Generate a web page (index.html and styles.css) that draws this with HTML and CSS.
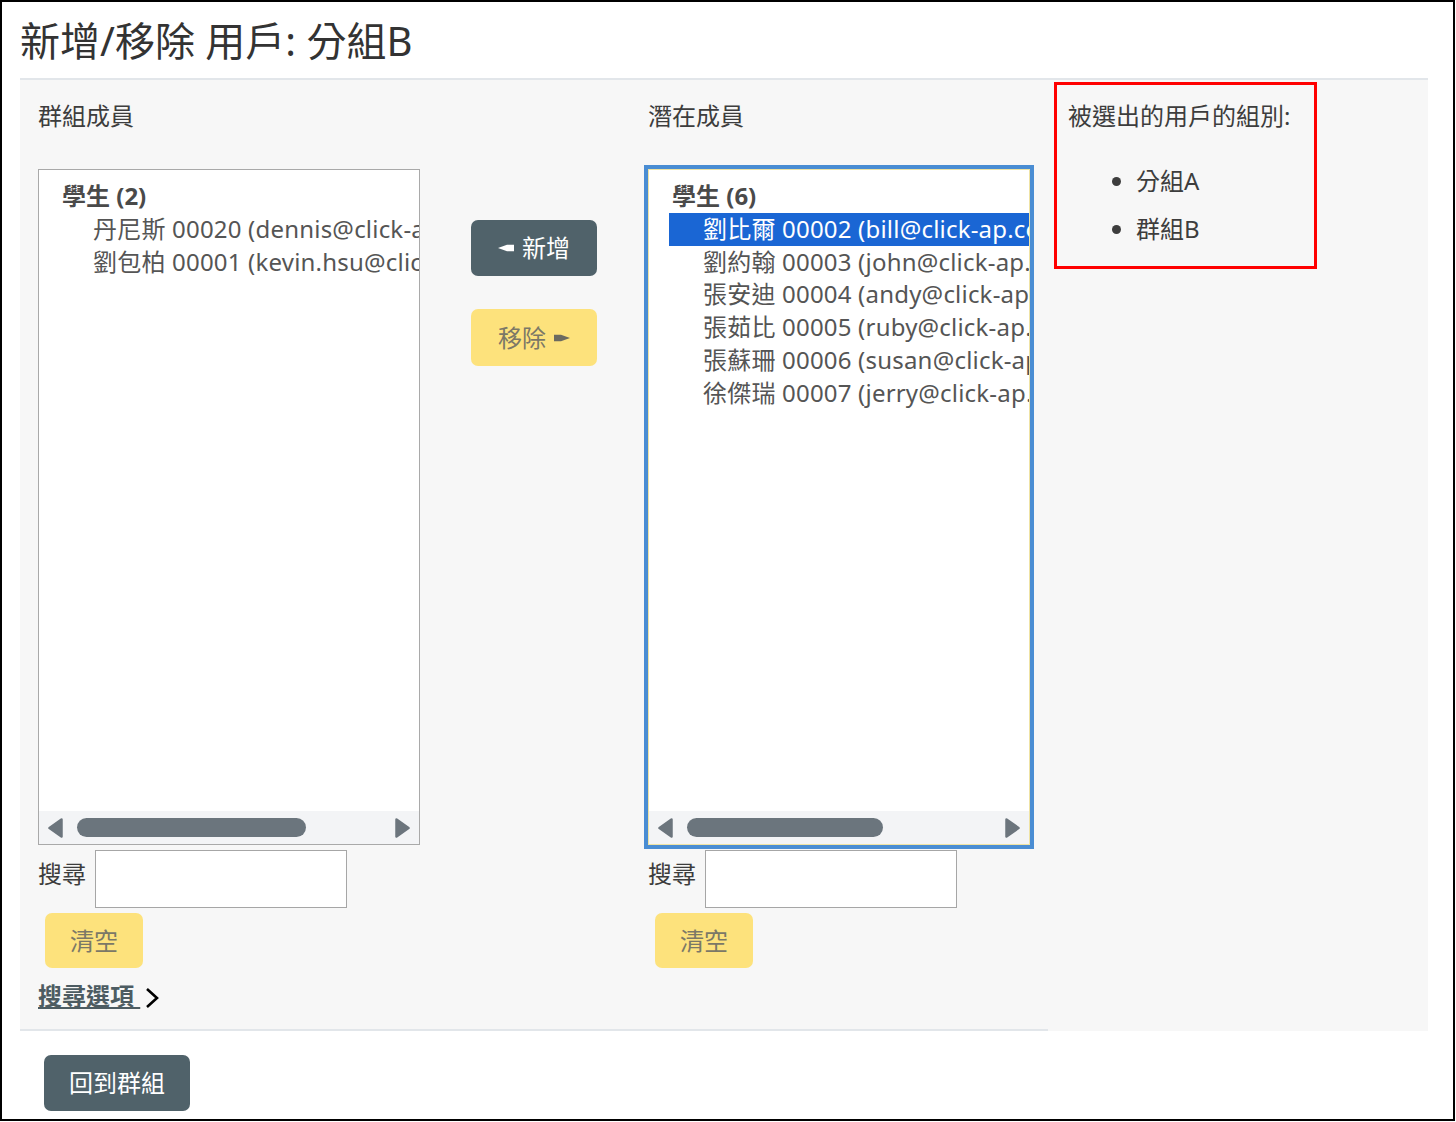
FILE: index.html
```html
<!DOCTYPE html>
<html lang="zh-Hant">
<head>
<meta charset="utf-8">
<title>新增/移除 用戶: 分組B</title>
<link rel="stylesheet" href="styles.css">
</head>
<body>
<div class="frame">
  <h1 class="title">新增/移除 用戶: 分組B</h1>
  <div class="panel">
    <div class="main">
      <div class="cols">
        <div class="col">
          <div class="label">群組成員</div>
          <div class="box">
            <div class="list">
              <div class="group">學生 (2)</div>
              <div class="item">丹尼斯 00020 (dennis@click-ap.com)</div>
              <div class="item">劉包柏 00001 (kevin.hsu@click-ap.com)</div>
            </div>
            <div class="hscroll">
              <svg class="arr" width="15" height="20" viewBox="0 0 15 20"><polygon points="13.5,1.5 1.5,10 13.5,18.5" fill="#6c757d" stroke="#6c757d" stroke-width="2.5" stroke-linejoin="round"/></svg>
              <div class="thumb thumb-left"></div>
              <svg class="arr arr-r" width="15" height="20" viewBox="0 0 15 20"><polygon points="1.5,1.5 13.5,10 1.5,18.5" fill="#6c757d" stroke="#6c757d" stroke-width="2.5" stroke-linejoin="round"/></svg>
            </div>
          </div>
          <div class="search">
            <span class="search-label">搜尋</span>
            <div class="input"></div>
          </div>
          <div class="btn btn-yellow btn-clear">清空</div>
          <div class="opts"><span class="opts-text">搜尋選項 </span><svg class="chev" width="14" height="22" viewBox="0 0 14 22"><polyline points="2,2 12,11 2,20" fill="none" stroke="#000" stroke-width="2.6" stroke-linejoin="miter"/></svg></div>
        </div>

        <div class="col mid">
          <div class="btn btn-dark btn-move">
            <svg width="16" height="8" viewBox="0 0 16 8"><polygon points="0,4 9,0.8 16,0.8 16,7.2 9,7.2" fill="#fff"/></svg>
            <span>新增</span>
          </div>
          <div class="btn btn-yellow btn-move btn-remove">
            <span>移除</span>
            <svg width="16" height="8" viewBox="0 0 16 8"><polygon points="16,4 7,0.8 0,0.8 0,7.2 7,7.2" fill="#6b6a60"/></svg>
          </div>
        </div>

        <div class="col">
          <div class="label">潛在成員</div>
          <div class="box box-focus">
            <div class="list">
              <div class="group">學生 (6)</div>
              <div class="item selected">劉比爾 00002 (bill@click-ap.com)</div>
              <div class="item">劉約翰 00003 (john@click-ap.com)</div>
              <div class="item">張安迪 00004 (andy@click-ap.com)</div>
              <div class="item">張茹比 00005 (ruby@click-ap.com)</div>
              <div class="item">張蘇珊 00006 (susan@click-ap.com)</div>
              <div class="item">徐傑瑞 00007 (jerry@click-ap.com)</div>
            </div>
            <div class="hscroll">
              <svg class="arr" width="15" height="20" viewBox="0 0 15 20"><polygon points="13.5,1.5 1.5,10 13.5,18.5" fill="#6c757d" stroke="#6c757d" stroke-width="2.5" stroke-linejoin="round"/></svg>
              <div class="thumb thumb-right"></div>
              <svg class="arr arr-r" width="15" height="20" viewBox="0 0 15 20"><polygon points="1.5,1.5 13.5,10 1.5,18.5" fill="#6c757d" stroke="#6c757d" stroke-width="2.5" stroke-linejoin="round"/></svg>
            </div>
          </div>
          <div class="search">
            <span class="search-label">搜尋</span>
            <div class="input"></div>
          </div>
          <div class="btn btn-yellow btn-clear">清空</div>
        </div>
      </div>
    </div>
    <div class="side">
      <div class="redbox">
        <div class="label">被選出的用戶的組別:</div>
        <ul class="groups">
          <li>分組A</li>
          <li>群組B</li>
        </ul>
      </div>
    </div>
  </div>
  <div class="footer">
    <div class="btn btn-dark btn-back">回到群組</div>
  </div>
</div>
</body>
</html>
```

FILE: styles.css
```css
* { box-sizing: border-box; }

html, body {
  margin: 0;
  padding: 0;
  background: #fff;
}

body {
  font-family: "Noto Sans", "Noto Sans CJK TC", sans-serif;
  color: #3d3d3d;
  font-size: 24px;
}

.frame {
  width: 1455px;
  height: 1121px;
  border: 2px solid #000;
  padding-left: 18px;
  overflow: hidden;
}

.title {
  margin: 0;
  height: 76px;
  padding-top: 14px;
  font-size: 40px;
  line-height: 50px;
  font-weight: 400;
  color: #333;
}

.panel {
  display: flex;
  width: 1408px;
  border-top: 2px solid #e2e6ea;
  background: #f7f7f7;
}

.main {
  width: 1028px;
  padding: 18px 18px 15px;
  border-bottom: 2px solid #e2e6ea;
}

.cols {
  display: grid;
  grid-template-columns: 382px 228px 382px;
}

.col {
  display: flex;
  flex-direction: column;
  align-items: flex-start;
}

.label {
  font-size: 24px;
  line-height: 36px;
  color: #3d3d3d;
  white-space: nowrap;
}

.box {
  margin-top: 35px;
  width: 382px;
  height: 676px;
  border: 1px solid #a9a9a9;
  background: #fff;
  display: flex;
  flex-direction: column;
  overflow: hidden;
}

.box-focus {
  border-color: #efe3a4;
  outline: 4px solid #4a8dd3;
}

.list {
  flex: 1;
  padding-top: 10px;
  overflow: hidden;
  white-space: nowrap;
}

.group {
  padding-left: 23px;
  line-height: 32.8px;
  font-weight: 700;
  color: #4a4a4a;
}

.item {
  margin-left: 20px;
  padding-left: 34px;
  line-height: 32.8px;
  color: #555;
  letter-spacing: 0.2px;
}

.item.selected {
  background: #1a66d4;
  color: #fff;
}

.hscroll {
  height: 33px;
  background: #f3f4f6;
  display: flex;
  align-items: center;
  padding: 0 9px;
  flex-shrink: 0;
}

.arr { display: block; flex-shrink: 0; }
.arr-r { margin-left: auto; }

.thumb {
  margin-left: 14px;
  height: 19px;
  border-radius: 10px;
  background: #6b757d;
}
.thumb-left { width: 229px; }
.thumb-right { width: 196px; }

.search {
  margin-top: 5px;
  display: flex;
  align-items: flex-start;
}

.search-label {
  margin-top: 6px;
  width: 48px;
  margin-right: 9px;
  line-height: 36px;
  color: #3d3d3d;
}

.input {
  width: 252px;
  height: 58px;
  border: 1px solid #a6a6a6;
  background: #fff;
}

.btn {
  display: flex;
  align-items: center;
  justify-content: center;
  border-radius: 7px;
  font-size: 24px;
  line-height: 36px;
  white-space: nowrap;
}

.btn-yellow {
  background: #fde27c;
  color: #7b7867;
}

.btn-dark {
  background: #50626a;
  color: #fff;
}

.btn-clear {
  margin-top: 5px;
  margin-left: 7px;
  width: 98px;
  height: 55px;
}

.opts {
  margin-top: 10px;
  line-height: 36px;
  display: flex;
  align-items: center;
}

.opts-text {
  font-weight: 700;
  color: #4d5c62;
  text-decoration: underline;
  white-space: pre;
}

.chev { display: block; margin-top: 4px; margin-left: 5px; }

.mid {
  align-items: center;
  padding-top: 122px;
}

.btn-move {
  width: 126px;
  height: 56px;
  gap: 8px;
}

.btn-move svg { display: block; }

.btn-remove {
  margin-top: 33px;
  height: 57px;
}

.side {
  flex: 1;
  margin-bottom: 2px;
}

.redbox {
  margin: 2px 0 0 6px;
  width: 263px;
  border: 3px solid #ff0000;
  padding: 13px 11px 19px;
}

.groups {
  margin: 29px 0 0;
  padding-left: 68px;
  color: #3d3d3d;
}

.groups li {
  line-height: 36px;
}

.groups li + li {
  margin-top: 12px;
}

.footer {
  padding: 24px 0 0 24px;
}

.btn-back {
  width: 146px;
  height: 56px;
}
```
